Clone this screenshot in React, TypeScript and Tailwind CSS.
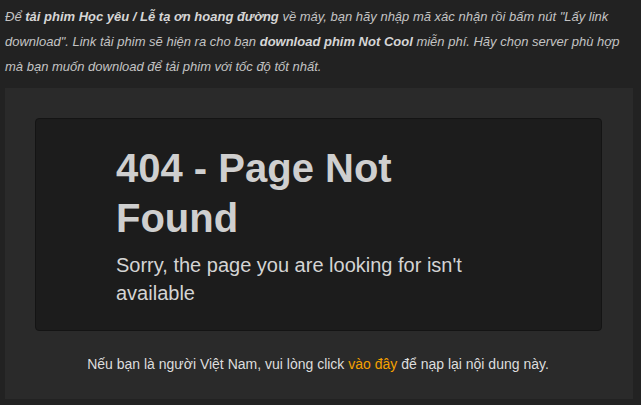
export default function App() {
  return (
    <div className="w-[641px] h-[405px] overflow-hidden bg-[#222222] font-['Liberation_Sans',Arial,sans-serif]">
      <p className="px-[5px] pt-[4px] text-[13px] leading-[25px] italic text-[#c4c4c4]">
        Để <b className="text-[#d6d6d6]">tải phim Học yêu / Lễ tạ ơn hoang đường</b> về máy, bạn hãy nhập mã xác
        nhận rồi bấm nút "Lấy link download". Link tải phim sẽ hiện ra cho bạn{" "}
        <b className="text-[#d6d6d6]">download phim Not Cool</b> miễn phí. Hãy chọn server phù hợp mà bạn muốn
        download để tải phim với tốc độ tốt nhất.
      </p>
      <div className="ml-[5px] mt-[9px] w-[628px] h-[311px] bg-[#2a2a2a] pt-[30px] pl-[30px]">
        <div className="w-[567px] h-[213px] rounded-[4px] border border-[#141414] bg-[#1c1c1c] px-[80px] pt-[24px]">
          <h1 className="text-[40px] leading-[50px] font-bold text-[#cfcfcf]">404 - Page Not Found</h1>
          <p className="mt-[8px] text-[20px] leading-[28px] text-[#d4d4d4]">
            Sorry, the page you are looking for isn't available
          </p>
        </div>
        <p className="mt-[23px] pr-[32px] text-center text-[14px] leading-[20px] text-[#dddddd]">
          Nếu bạn là người Việt Nam, vui lòng click <span className="text-[#f5a000]">vào đây</span> để nạp lại nội
          dung này.
        </p>
      </div>
    </div>
  );
}
